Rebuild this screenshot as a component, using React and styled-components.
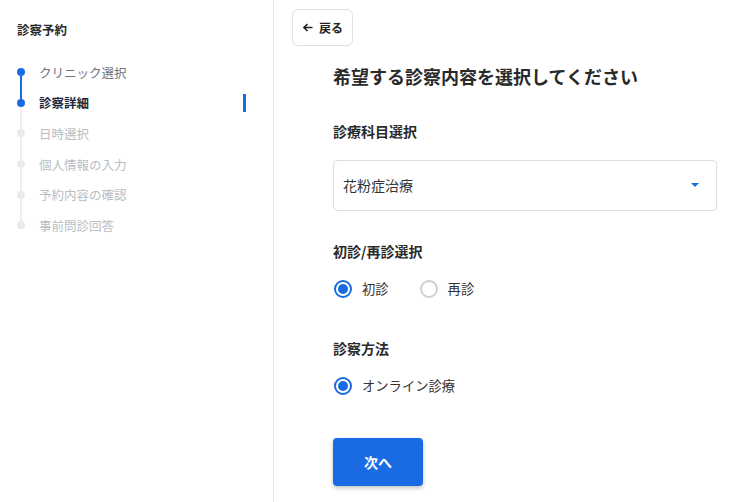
import React from "react";
import styled, { createGlobalStyle } from "styled-components";

const Global = createGlobalStyle`
  html, body { margin: 0; padding: 0; background: #fff; }
  body { font-family: "Noto Sans CJK JP", "Noto Sans", sans-serif; color: #222; }
  * { box-sizing: border-box; }
`;

const Layout = styled.div`
  display: flex;
  height: 100vh;
  min-height: 502px;
`;

const Sidebar = styled.aside`
  width: 274px;
  flex-shrink: 0;
  border-right: 1px solid #e6e7ea;
  padding: 20px 27px 0 17px;
`;

const SideTitle = styled.div`
  font-size: 12.5px;
  font-weight: 700;
  line-height: 20px;
  color: #2b2b2b;
  margin-bottom: 17px;
`;

const StepList = styled.ol`
  list-style: none;
  margin: 0;
  padding: 0;
`;

const Step = styled.li`
  position: relative;
  display: flex;
  align-items: center;
  height: 30.6px;
  padding-left: 22px;
  font-size: 12.5px;
  font-weight: ${(p) => (p.$state === "active" ? 700 : 400)};
  color: ${(p) =>
    p.$state === "active" ? "#1e2a3b" : p.$state === "done" ? "#6f737b" : "#b9bcc2"};

  &::before {
    content: "";
    position: absolute;
    left: 0;
    top: 50%;
    width: 8px;
    height: 8px;
    margin-top: -4px;
    border-radius: 50%;
    background: ${(p) => (p.$state === "todo" ? "#e9eaee" : "#1a6be3")};
    z-index: 1;
  }

  &::after {
    content: "";
    position: absolute;
    left: 3px;
    top: 50%;
    width: 2px;
    height: ${(p) => (p.$last ? "0" : "30.6px")};
    background: ${(p) => (p.$lineActive ? "#1a6be3" : "#eceef1")};
  }
`;

const ActiveBar = styled.span`
  position: absolute;
  right: 0;
  top: 50%;
  width: 3px;
  height: 18px;
  margin-top: -9px;
  background: #1a6be3;
`;

const Main = styled.main`
  flex: 1;
  padding: 9px 18px 0 18px;
`;

const BackButton = styled.button`
  display: inline-flex;
  align-items: center;
  gap: 6px;
  height: 37px;
  width: 61px;
  padding: 0 0 0 10px;
  border: 1px solid #dfe1e5;
  border-radius: 6px;
  background: #fff;
  font-family: inherit;
  font-size: 12px;
  font-weight: 700;
  color: #222;
  cursor: pointer;
`;

const Content = styled.div`
  padding-left: 41px;
  display: flex;
  flex-direction: column;
`;

const Title = styled.h1`
  margin: 17px 0 0;
  font-size: 18px;
  line-height: 27px;
  font-weight: 700;
  color: #2a2a2a;
`;

const SectionLabel = styled.h2`
  margin: ${(p) => p.$mt}px 0 0;
  font-size: 14px;
  line-height: 21px;
  font-weight: 700;
  color: #2a2a2a;
`;

const SelectBox = styled.div`
  margin-top: 17.5px;
  height: 51px;
  width: 384px;
  border: 1px solid #dcdfe5;
  border-radius: 4px;
  display: flex;
  align-items: center;
  justify-content: space-between;
  padding: 0 17px 0 9px;
  font-size: 14px;
  color: #333;
`;

const Caret = styled.span`
  width: 0;
  height: 0;
  border-left: 4px solid transparent;
  border-right: 4px solid transparent;
  border-top: 4px solid #1a6be3;
`;

const RadioRow = styled.div`
  margin-top: 14.5px;
  height: 24px;
  display: flex;
  align-items: center;
  gap: 30px;
`;

const RadioLabel = styled.label`
  display: flex;
  align-items: center;
  gap: 10px;
  font-size: 13.3px;
  color: #333;
  padding-left: 1px;
`;

const RadioCircle = styled.span`
  width: 18px;
  height: 18px;
  border-radius: 50%;
  border: 2px solid ${(p) => (p.$checked ? "#1a6be3" : "#cfcfcf")};
  display: flex;
  align-items: center;
  justify-content: center;

  &::after {
    content: "";
    width: 10px;
    height: 10px;
    border-radius: 50%;
    background: ${(p) => (p.$checked ? "#1a6be3" : "transparent")};
  }
`;

const NextButton = styled.button`
  margin-top: 40px;
  width: 90px;
  height: 48px;
  border: none;
  border-radius: 4px;
  background: #1a6be3;
  color: #fff;
  font-family: inherit;
  font-size: 14px;
  font-weight: 700;
  box-shadow: 0 2px 4px rgba(0, 0, 0, 0.25);
  cursor: pointer;
`;

const steps = [
  { label: "クリニック選択", state: "done" },
  { label: "診察詳細", state: "active" },
  { label: "日時選択", state: "todo" },
  { label: "個人情報の入力", state: "todo" },
  { label: "予約内容の確認", state: "todo" },
  { label: "事前問診回答", state: "todo" },
];

function Radio({ checked, children }) {
  return (
    <RadioLabel>
      <RadioCircle $checked={checked} />
      {children}
    </RadioLabel>
  );
}

export default function App() {
  return (
    <>
      <Global />
      <Layout>
        <Sidebar>
          <SideTitle>診察予約</SideTitle>
          <StepList>
            {steps.map((s, i) => (
              <Step
                key={s.label}
                $state={s.state}
                $last={i === steps.length - 1}
                $lineActive={i === 0}
              >
                {s.label}
                {s.state === "active" && <ActiveBar />}
              </Step>
            ))}
          </StepList>
        </Sidebar>
        <Main>
          <BackButton>
            <svg width="10" height="9" viewBox="0 0 10 9" fill="none">
              <path d="M9.5 4.5H1.5M4.5 1L1 4.5L4.5 8" stroke="#222" strokeWidth="1.6" />
            </svg>
            戻る
          </BackButton>
          <Content>
            <Title>希望する診察内容を選択してください</Title>
            <SectionLabel $mt={31}>診療科目選択</SectionLabel>
            <SelectBox>
              花粉症治療
              <Caret />
            </SelectBox>
            <SectionLabel $mt={30.5}>初診/再診選択</SectionLabel>
            <RadioRow>
              <Radio checked>初診</Radio>
              <Radio>再診</Radio>
            </RadioRow>
            <SectionLabel $mt={37.5}>診察方法</SectionLabel>
            <RadioRow>
              <Radio checked>オンライン診療</Radio>
            </RadioRow>
            <div>
              <NextButton>次へ</NextButton>
            </div>
          </Content>
        </Main>
      </Layout>
    </>
  );
}
